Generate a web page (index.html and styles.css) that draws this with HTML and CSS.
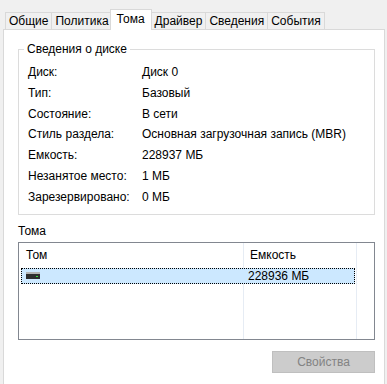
FILE: index.html
```html
<!DOCTYPE html>
<html lang="ru">
<head>
    <meta charset="UTF-8">
    <title>Свойства диска</title>
    <link rel="stylesheet" href="styles.css">
</head>
<body>

    <div class="tabs">
        <div class="tab">Общие</div>
        <div class="tab">Политика</div>
        <div class="tab active">Тома</div>
        <div class="tab">Драйвер</div>
        <div class="tab">Сведения</div>
        <div class="tab">События</div>
    </div>

    <div class="page">
        <fieldset class="group">
            <legend>Сведения о диске</legend>
            <div class="props">
                <div class="row"><span class="name">Диск:</span><span>Диск 0</span></div>
                <div class="row"><span class="name">Тип:</span><span>Базовый</span></div>
                <div class="row"><span class="name">Состояние:</span><span>В сети</span></div>
                <div class="row"><span class="name">Стиль раздела:</span><span>Основная загрузочная запись (MBR)</span></div>
                <div class="row"><span class="name">Емкость:</span><span>228937 МБ</span></div>
                <div class="row"><span class="name">Незанятое место:</span><span>1 МБ</span></div>
                <div class="row"><span class="name">Зарезервировано:</span><span>0 МБ</span></div>
            </div>
        </fieldset>

        <div class="section-title">Тома</div>

        <div class="list">
            <div class="list-head">
                <div class="col first">Том</div>
                <div class="col second">Емкость</div>
            </div>
            <div class="list-row selected">
                <div class="col first">
                    <!-- значок диска -->
                    <svg class="drive" width="14" height="7" viewBox="0 0 14 7">
                        <rect x="0" y="0" width="14" height="7" fill="#5a5a5a"/>
                        <rect x="0" y="0" width="14" height="2" fill="#b4b4b4"/>
                        <rect x="0" y="2" width="14" height="5" fill="#2e2e2e"/>
                        <rect x="10" y="4" width="2" height="1" fill="#3ddc3d"/>
                    </svg>
                </div>
                <div class="col second">228936 МБ</div>
            </div>
        </div>

        <button class="btn" disabled>Свойства</button>
    </div>

</body>
</html>
```

FILE: styles.css
```css
body {
    font-family: "Liberation Sans", Arial, sans-serif;
    font-size: 12px;
    color: #000000;
    background-color: #f0f0f0;
    margin: 0;
    padding: 0;
    height: 384px;
    overflow: hidden;
}
.tabs {
    display: flex;
    align-items: flex-end;
    height: 20px;
    padding: 9px 0 0 5px;
}
.tab {
    height: 16px;
    line-height: 16px;
    padding: 0 3px;
    border: 1px solid #d9d9d9;
    border-bottom: none;
    margin-right: -1px;
    background-color: #f0f0f0;
}
.tab.active {
    position: relative;
    z-index: 1;
    height: 20px;
    line-height: 18px;
    margin: 0 -1px -1px -2px;
    padding: 0 6px;
    background-color: #ffffff;
}
.page {
    margin: 0 2px 0 3px;
    height: 355px;
    border: 1px solid #d9d9d9;
    background-color: #ffffff;
    overflow: hidden;
}
.group {
    margin: 12px 9px 0 14px;
    padding: 6px 0 6px 9px;
    border: 1px solid #dcdcdc;
    min-width: 0;
}
.group legend {
    line-height: 14px;
    padding: 0 3px;
    margin-left: -4px;
}
.row {
    display: grid;
    grid-template-columns: 114px auto;
    height: 20.8px;
    line-height: 20.8px;
    white-space: nowrap;
}
.section-title {
    margin: 9px 0 4px 14px;
    line-height: 14px;
}
.list {
    margin: 0 9px 0 14px;
    height: 96px;
    border: 1px solid #828790;
    background-color: #ffffff;
    background-image: linear-gradient(to right,
        transparent 224px, #e6ecf4 224px, #e6ecf4 225px, transparent 225px,
        transparent 337px, #e6ecf4 337px, #e6ecf4 338px, transparent 338px);
}
.list-head {
    display: flex;
    height: 25px;
    line-height: 25px;
}
.list-head .first {
    width: 218px;
    padding-left: 7px;
}
.list-head .second {
    padding-left: 6px;
}
.list-row {
    display: flex;
    align-items: center;
    width: 332px;
    height: 14px;
    margin: 0 0 0 2px;
    border: 1px dotted #000000;
}
.list-row.selected {
    background-color: #cce8ff;
}
.list-row .first {
    width: 216px;
    padding-left: 4px;
    display: flex;
    align-items: center;
}
.list-row .second {
    padding-left: 6px;
    line-height: 14px;
}
.drive {
    display: block;
}
.btn {
    display: block;
    width: 103px;
    height: 22px;
    margin: 11px 9px 0 auto;
    padding: 0;
    font-family: inherit;
    font-size: 12px;
    color: #838383;
    background-color: #cccccc;
    border: 1px solid #bfbfbf;
    border-radius: 0;
}
```
